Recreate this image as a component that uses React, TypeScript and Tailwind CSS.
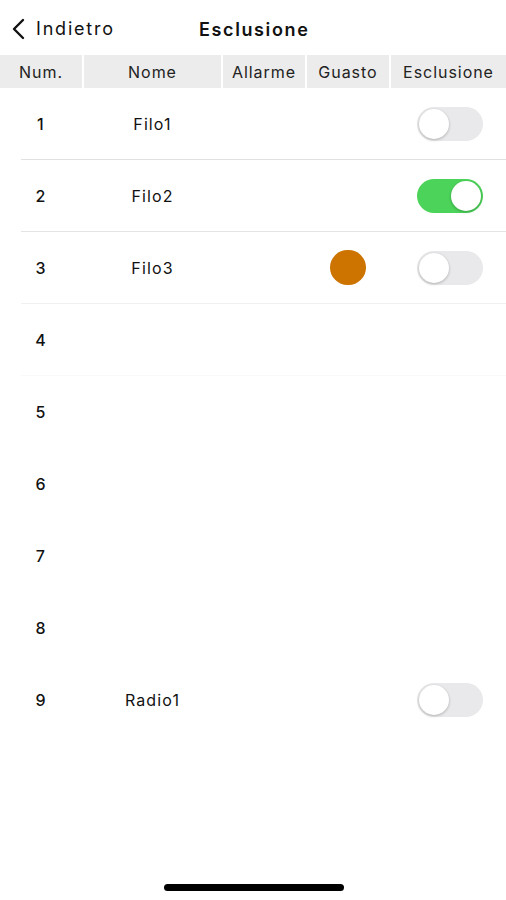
const rows = [
  { num: 1, name: "Filo1", fault: false, toggle: "off" },
  { num: 2, name: "Filo2", fault: false, toggle: "on" },
  { num: 3, name: "Filo3", fault: true, toggle: "off" },
  { num: 4, name: "", fault: false, toggle: null },
  { num: 5, name: "", fault: false, toggle: null },
  { num: 6, name: "", fault: false, toggle: null },
  { num: 7, name: "", fault: false, toggle: null },
  { num: 8, name: "", fault: false, toggle: null },
  { num: 9, name: "Radio1", fault: false, toggle: "off" },
];

const separators = ["bg-[#e1e1e1]", "bg-[#e4e4e4]", "bg-[#f0f0f0]", "bg-[#f9f9f9]"];

function Toggle({ on }: { on: boolean }) {
  return (
    <div
      className={
        on
          ? "flex h-[34px] w-[66px] items-center justify-end rounded-full bg-[#4cd35a] p-[2px]"
          : "flex h-[34px] w-[66px] items-center justify-start rounded-full bg-[#e9e9eb] p-[2px]"
      }
    >
      <div className="h-[30px] w-[30px] rounded-full bg-white shadow-[0_1px_3px_rgba(0,0,0,0.25)]" />
    </div>
  );
}

export default function App() {
  return (
    <div
      className="relative h-[900px] w-[506px] overflow-hidden bg-white text-[#111] tracking-[0.07em]"
      style={{ fontFamily: "Inter, 'Liberation Sans', sans-serif" }}
    >
      <div className="relative flex h-[55px] items-center">
        <div className="flex items-center pl-[11px] pt-[2px]">
          <svg width="16" height="22" viewBox="0 0 16 22" fill="none">
            <path d="M12 2 L3 11 L12 20" stroke="#111" strokeWidth="2.4" strokeLinecap="round" strokeLinejoin="round" />
          </svg>
          <span className="ml-[9px] text-[18px] tracking-[0.1em]">Indietro</span>
        </div>
        <div className="absolute left-[199px] top-[16px] text-[18px] font-semibold tracking-[0.09em]">Esclusione</div>
      </div>

      <div className="grid h-[33px] grid-cols-[82px_137px_82px_82px_115px] gap-[2px] text-[16px] text-[#222] tracking-[0.06em]">
        {["Num.", "Nome", "Allarme", "Guasto", "Esclusione"].map((h) => (
          <div key={h} className="flex items-center justify-center bg-[#ececec]">
            {h}
          </div>
        ))}
      </div>

      <div>
        {rows.map((r, i) => (
          <div key={r.num}>
            <div className="grid h-[71px] grid-cols-[82px_137px_82px_82px_115px] gap-[2px] text-[16px]">
              <div className="flex items-center justify-center font-medium">{r.num}</div>
              <div className="flex items-center justify-center">{r.name}</div>
              <div />
              <div className="flex items-center justify-center">
                {r.fault && <div className="h-[35px] w-[36px] rounded-full bg-[#cc7300]" />}
              </div>
              <div className="flex items-center justify-center pl-[3px]">
                {r.toggle && <Toggle on={r.toggle === "on"} />}
              </div>
            </div>
            <div className={"ml-[21px] h-px " + (separators[i] ?? "bg-transparent")} />
          </div>
        ))}
      </div>

      <div className="absolute left-[164px] top-[884px] h-[7px] w-[180px] rounded-full bg-black" />
    </div>
  );
}
